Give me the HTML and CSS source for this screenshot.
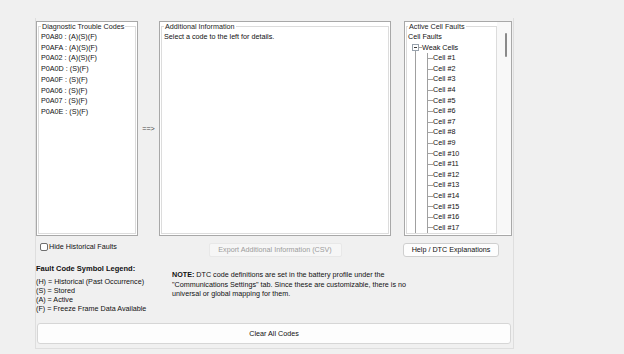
FILE: index.html
```html
<!DOCTYPE html>
<html lang="en">
<head>
    <meta charset="UTF-8">
    <meta name="viewport" content="width=device-width, initial-scale=1.0">
    <title>Diagnostic Trouble Codes</title>
    <link rel="stylesheet" href="styles.css">
</head>
<body>

    <div class="panel">
        <div class="top-row">
            <div class="box">
                <fieldset>
                    <legend>Diagnostic Trouble Codes</legend>
                    <ul class="code-list">
                        <li>P0A80 : (A)(S)(F)</li>
                        <li>P0AFA : (A)(S)(F)</li>
                        <li>P0A02 : (A)(S)(F)</li>
                        <li>P0A0D : (S)(F)</li>
                        <li>P0A0F : (S)(F)</li>
                        <li>P0A06 : (S)(F)</li>
                        <li>P0A07 : (S)(F)</li>
                        <li>P0A0E : (S)(F)</li>
                    </ul>
                </fieldset>
            </div>
            <div class="arrow">==&gt;</div>
            <div class="box">
                <fieldset>
                    <legend>Additional Information</legend>
                    <p class="details">Select a code to the left for details.</p>
                </fieldset>
            </div>
            <div></div>
            <div class="box tree-box">
                <fieldset>
                    <legend>Active Cell Faults</legend>
                    <div class="tree">
                        <div class="tree-root">Cell Faults</div>
                        <div class="tree-node"><span class="toggle"></span><span class="branch"></span>Weak Cells</div>
                        <div class="tree-children">
                            <ul>
                                <li>Cell #1</li>
                                <li>Cell #2</li>
                                <li>Cell #3</li>
                                <li>Cell #4</li>
                                <li>Cell #5</li>
                                <li>Cell #6</li>
                                <li>Cell #7</li>
                                <li>Cell #8</li>
                                <li>Cell #9</li>
                                <li>Cell #10</li>
                                <li>Cell #11</li>
                                <li>Cell #12</li>
                                <li>Cell #13</li>
                                <li>Cell #14</li>
                                <li>Cell #15</li>
                                <li>Cell #16</li>
                                <li>Cell #17</li>
                            </ul>
                        </div>
                    </div>
                </fieldset>
                <div class="scrollbar"><div class="thumb"></div></div>
            </div>
        </div>

        <div class="button-row">
            <label class="hide-label"><input type="checkbox"> Hide Historical Faults</label>
            <button class="export-btn" disabled>Export Additional Information (CSV)</button>
            <button class="help-btn">Help / DTC Explanations</button>
        </div>

        <div class="info-row">
            <div class="symbol-legend">
                <h4>Fault Code Symbol Legend:</h4>
                <div>(H) = Historical (Past Occurrence)</div>
                <div>(S) = Stored</div>
                <div>(A) = Active</div>
                <div>(F) = Freeze Frame Data Available</div>
            </div>
            <p class="note"><b>NOTE:</b> DTC code definitions are set in the battery profile under the<br>"Communications Settings" tab. Since these are customizable, there is no<br>universal or global mapping for them.</p>
        </div>

        <button class="clear-btn">Clear All Codes</button>
    </div>

</body>
</html>
```

FILE: styles.css
```css
body {
    margin: 0;
    background-color: #f0f0f0;
    font-family: "Liberation Sans", Arial, sans-serif;
    font-size: 7.2px;
    color: #111;
}
.panel {
    width: 477px;
    margin: 18px 0 0 35px;
    padding: 3px 0 4px 0;
    border: 1px solid #dedede;
    border-top: none;
}
.top-row, .button-row {
    display: grid;
    grid-template-columns: 102px 21px 232px 13px 108px;
}
.top-row {
    grid-template-rows: 215px;
}
.box {
    display: flex;
    min-height: 0;
    overflow: hidden;
    background: white;
    border: 1px solid #a8a8a8;
    padding: 0 1px 1px 1px;
}
fieldset {
    flex: 1;
    min-width: 0;
    min-height: 0;
    margin: 0;
    padding: 1px 2px 0 2px;
    border: 1px solid #dcdcdc;
    overflow: hidden;
}
legend {
    padding: 0 1px;
    line-height: 9px;
    color: #222;
}
.code-list {
    list-style: none;
    margin: 0;
    padding: 0;
    line-height: 10.7px;
}
.details {
    margin: 0;
    line-height: 10.7px;
}
.arrow {
    display: flex;
    align-items: center;
    justify-content: center;
    color: #444;
}

/* tree */
.tree-box {
    padding-right: 0;
}
.tree-box fieldset {
    padding-left: 1px;
}
.tree {
    line-height: 10.6px;
}
.tree-node {
    display: flex;
    align-items: center;
    height: 10.6px;
}
.toggle {
    display: flex;
    align-items: center;
    justify-content: center;
    width: 5px;
    height: 5px;
    margin-left: 4px;
    border: 1px solid #98a2ad;
    background: white;
}
.toggle::after {
    content: "";
    width: 3px;
    height: 1px;
    background: #3a3a3a;
}
.branch {
    width: 3px;
    height: 1px;
    background: #a0a0a0;
}
.tree-children {
    margin: -3px 0 0 7px;
    padding-top: 3px;
    border-left: 1px solid #a0a0a0;
}
.tree-children ul {
    list-style: none;
    margin: 0 0 0 11px;
    padding: 0;
    border-left: 1px solid #a0a0a0;
}
.tree-children li {
    display: flex;
    align-items: center;
    height: 10.6px;
}
.tree-children li::before {
    content: "";
    width: 5px;
    height: 1px;
    background: #a0a0a0;
}
.scrollbar {
    flex-shrink: 0;
    width: 14px;
    background: #f8f8f8;
}
.thumb {
    width: 2px;
    height: 24px;
    margin: 11px 0 0 8px;
    border-radius: 1px;
    background: #8a8a8a;
}

/* controls */
.button-row {
    margin-top: 7px;
    height: 14px;
    align-items: start;
}
.hide-label {
    display: flex;
    align-items: center;
    gap: 1px;
    margin-left: 4px;
    line-height: 8px;
    white-space: nowrap;
}
.hide-label input {
    appearance: none;
    width: 8px;
    height: 8px;
    margin: 0;
    border: 1px solid #6e6e6e;
    border-radius: 2px;
    background: white;
}
button {
    font-family: inherit;
    font-size: inherit;
    padding: 0;
    line-height: 12px;
    white-space: nowrap;
}
.export-btn {
    grid-column: 3;
    justify-self: center;
    width: 133px;
    height: 14px;
    background-color: #f6f6f6;
    border: 1px solid #e8e8e8;
    border-radius: 2px;
    color: #9c9c9c;
}
.help-btn {
    grid-column: 5;
    margin-left: -1px;
    width: 96px;
    height: 14px;
    background-color: #fdfdfd;
    border: 1px solid #cfcfcf;
    border-radius: 3px;
    color: #111;
}
.info-row {
    display: flex;
    align-items: flex-start;
    margin-top: 7px;
}
.symbol-legend {
    width: 136px;
    line-height: 9.1px;
    white-space: nowrap;
}
.symbol-legend h4 {
    margin: 0 0 4px;
    font-size: 7.5px;
    line-height: 9px;
}
.note {
    margin: 6px 0 0;
    line-height: 9.5px;
    white-space: nowrap;
}
.clear-btn {
    display: block;
    margin: 10px 0 0 1px;
    width: 474px;
    height: 21px;
    background-color: #fdfdfd;
    border: 1px solid #d6d6d6;
    border-radius: 3px;
    color: #111;
}
```
